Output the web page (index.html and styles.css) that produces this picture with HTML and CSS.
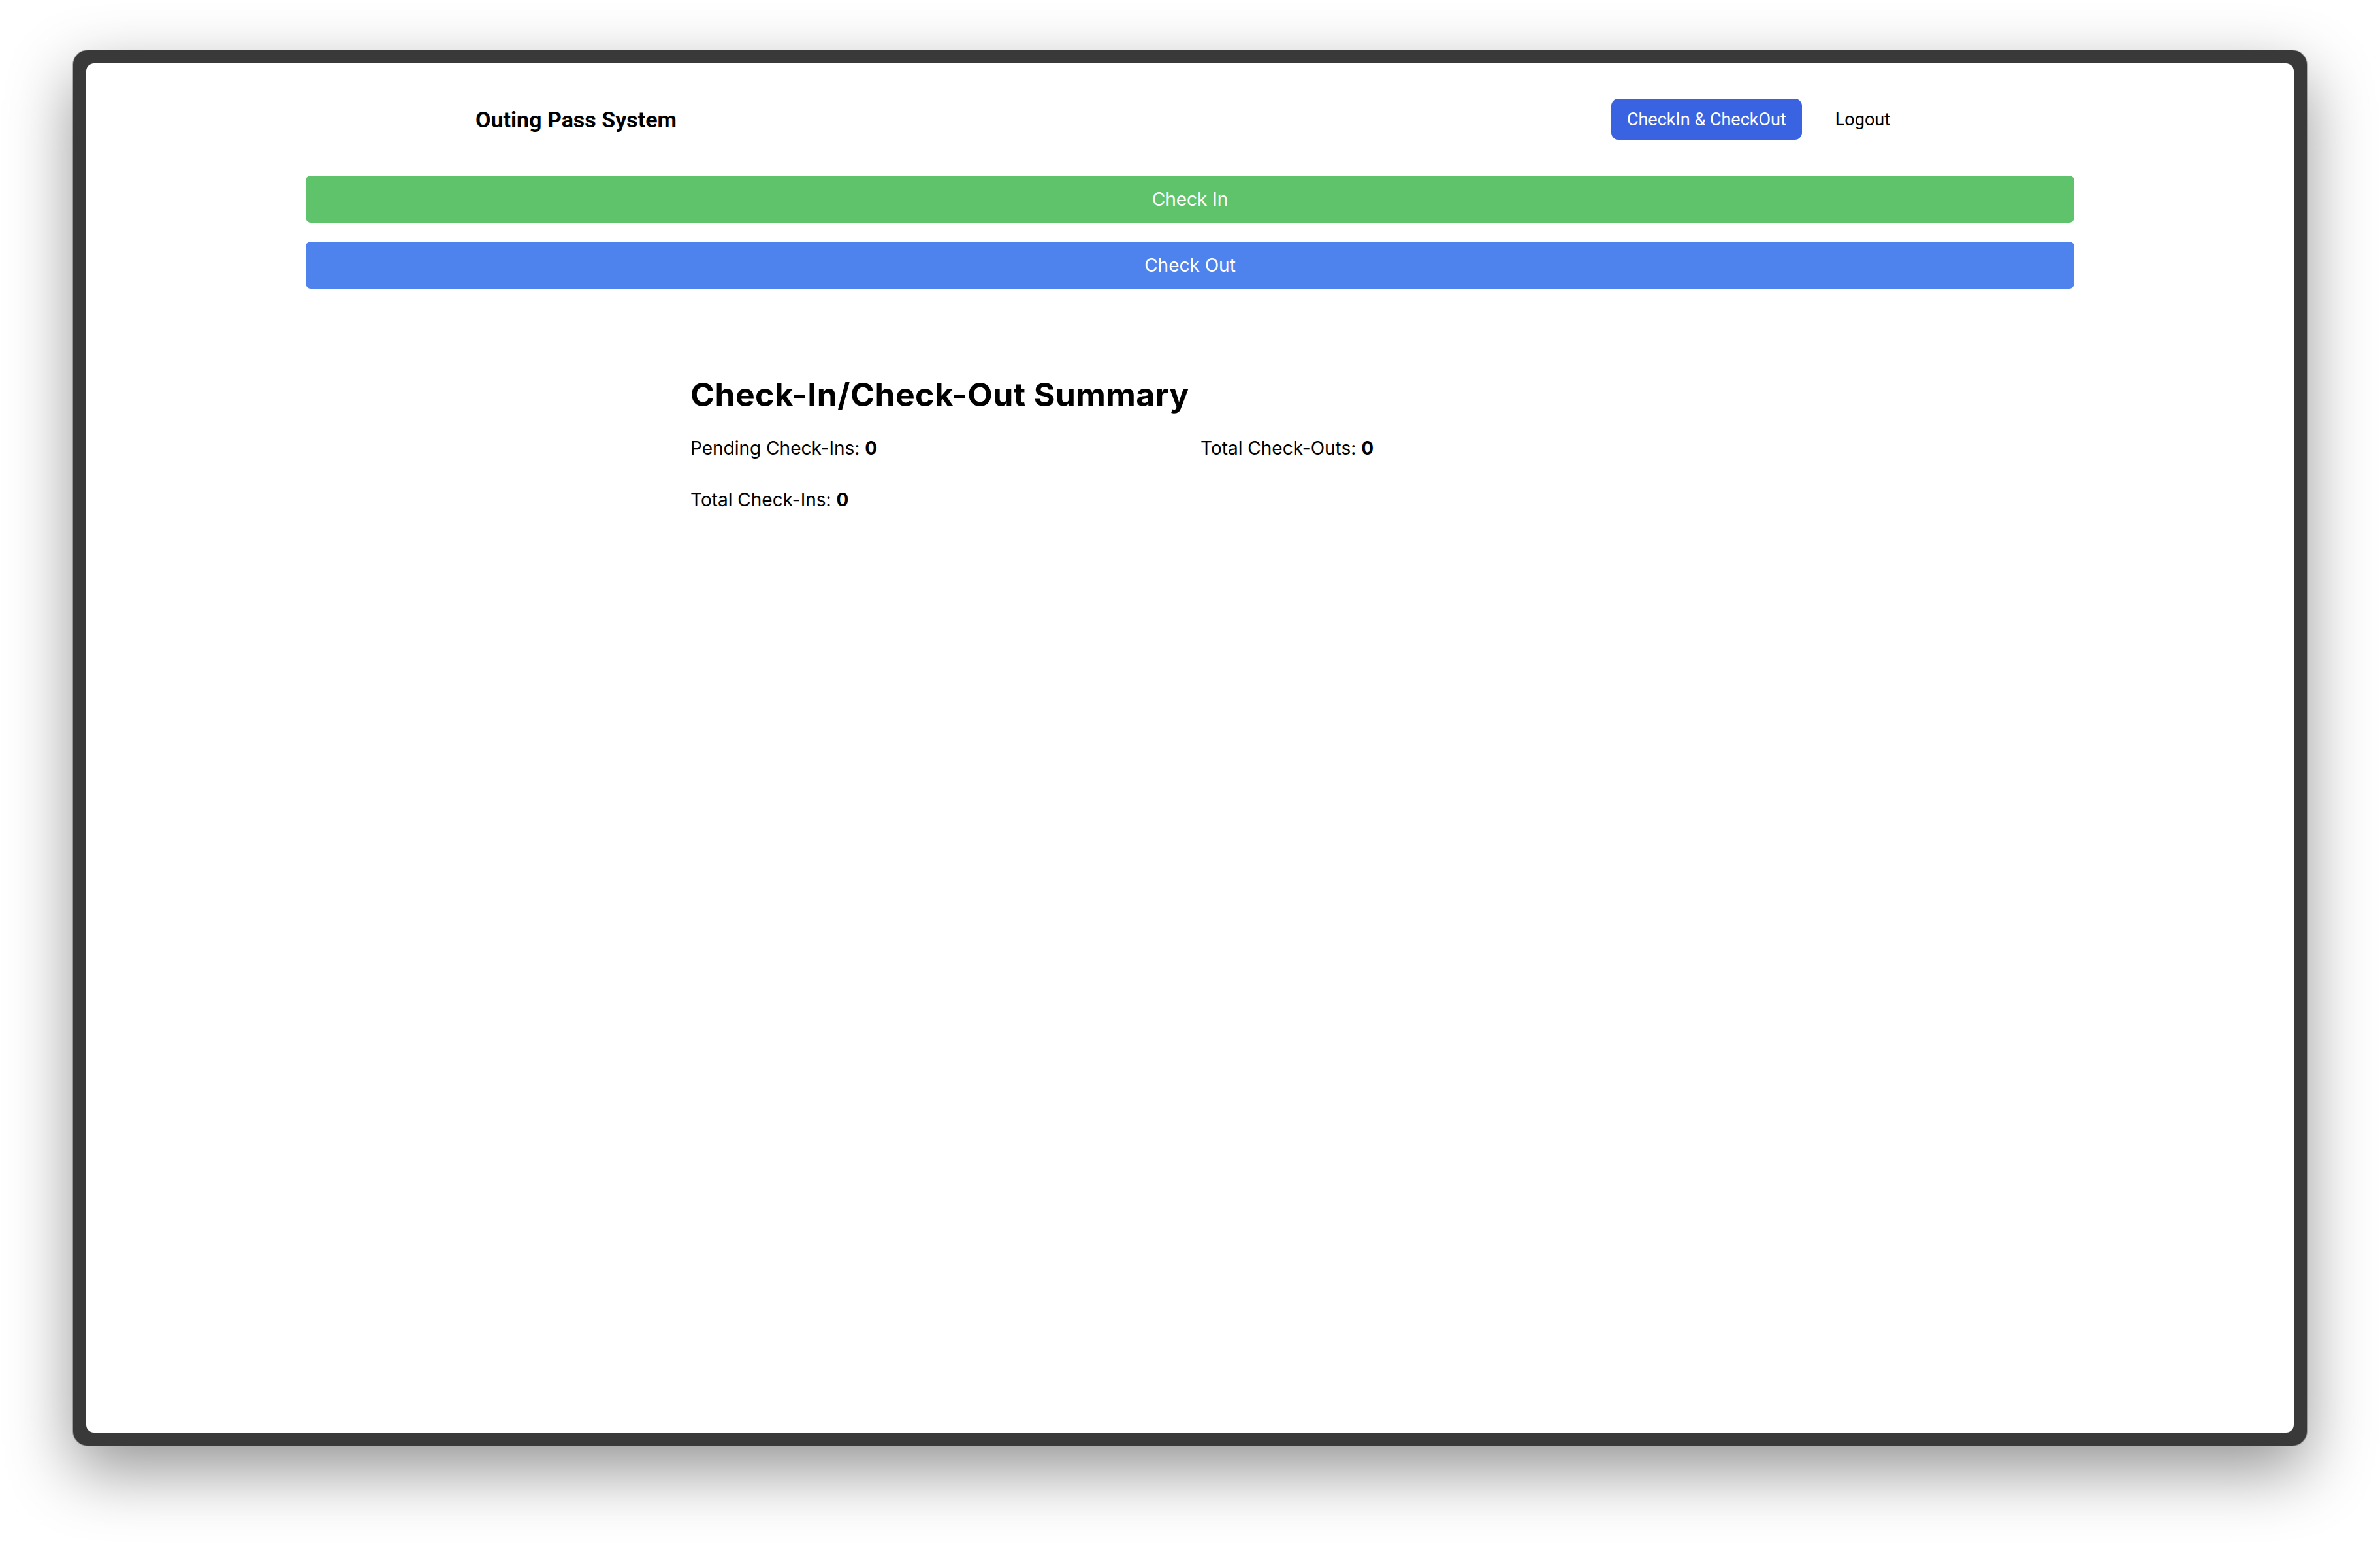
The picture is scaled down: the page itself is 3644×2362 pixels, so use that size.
FILE: index.html
```html
<!DOCTYPE html>
<html lang="en">
<head>
<meta charset="utf-8">
<title>Outing Pass System</title>
<link rel="stylesheet" href="styles.css">
</head>
<body>
<div class="stage">
  <div class="frame">
    <div class="screen">
      <nav class="nav">
        <div class="brand">Outing Pass System</div>
        <div class="nav-links">
          <a class="nav-btn active">CheckIn &amp; CheckOut</a>
          <a class="nav-btn">Logout</a>
        </div>
      </nav>
      <div class="actions">
        <button class="bar bar-in">Check In</button>
        <button class="bar bar-out">Check Out</button>
      </div>
      <section class="summary">
        <h2 class="summary-title">Check-In/Check-Out Summary</h2>
        <div class="stats">
          <p class="stat">Pending Check-Ins: <strong>0</strong></p>
          <p class="stat">Total Check-Outs: <strong>0</strong></p>
          <p class="stat">Total Check-Ins: <strong>0</strong></p>
        </div>
      </section>
    </div>
  </div>
</div>
</body>
</html>
```

FILE: styles.css
```css
* { box-sizing: border-box; }

html, body {
  margin: 0;
  padding: 0;
  background: #ffffff;
}

body {
  width: 3644px;
  height: 2362px;
  overflow: hidden;
  font-family: Inter, "Noto Sans", sans-serif;
  color: #000;
}

.stage {
  padding: 77px 112px 0 112px;
}

.frame {
  width: 3420px;
  height: 2136px;
  border: 20px solid #393939;
  border-radius: 22px;
  background: #393939;
  box-shadow: 0 0 0 1px rgba(0,0,0,0.25), 0 38px 100px rgba(0,0,0,0.42);
}

.screen {
  width: 100%;
  height: 100%;
  background: #ffffff;
  border-radius: 12px;
  overflow: hidden;
  padding-top: 54px;
}

.nav {
  height: 63px;
  display: flex;
  align-items: center;
  justify-content: space-between;
  padding: 0 618px 0 596px;
  font-family: Roboto, "Liberation Sans", sans-serif;
}

.brand {
  font-size: 34px;
  font-weight: 700;
  color: #000;
}

.nav-links {
  display: flex;
  align-items: center;
  gap: 51px;
  height: 100%;
}

.nav-btn {
  font-size: 27px;
  font-weight: 400;
  color: #000;
  text-decoration: none;
  height: 100%;
  display: flex;
  align-items: center;
}

.nav-btn.active {
  background: #3a63e2;
  color: #ffffff;
  padding: 0 24px;
  border-radius: 11px;
}

.actions {
  width: 2708px;
  margin: 55px auto 0 auto;
  display: flex;
  flex-direction: column;
  gap: 29px;
}

.bar {
  display: block;
  width: 100%;
  height: 72px;
  border: none;
  border-radius: 8px;
  color: #ffffff;
  font-family: Inter, "Noto Sans", sans-serif;
  font-size: 28px;
  font-weight: 400;
  padding: 0;
  cursor: pointer;
}

.bar-in { background: #5ec36b; }
.bar-out { background: #4e82ec; }

.summary {
  width: 1530px;
  margin: 132px auto 0 auto;
}

.summary-title {
  margin: 0;
  font-size: 50px;
  font-weight: 700;
  line-height: 60px;
  letter-spacing: 0.4px;
}

.stats {
  margin-top: 32px;
  display: grid;
  grid-template-columns: 1fr 1fr;
  column-gap: 32px;
  row-gap: 39px;
}

.stat {
  margin: 0;
  font-size: 28px;
  line-height: 40px;
  font-weight: 400;
}

.stat strong {
  font-weight: 700;
}
```
